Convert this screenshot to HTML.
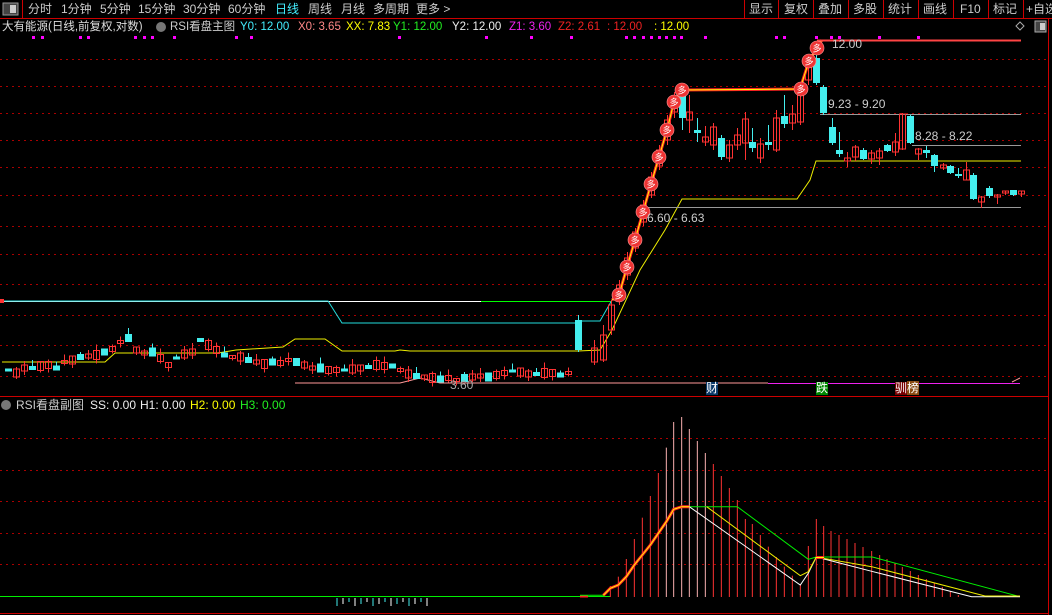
<!DOCTYPE html>
<html><head><meta charset="utf-8"><style>
html,body{margin:0;padding:0;background:#000;width:1052px;height:615px;overflow:hidden}
body{font-family:"Liberation Sans","Noto Sans CJK SC",sans-serif;font-size:12px;color:#ccc;position:relative}
.t{position:absolute;white-space:nowrap;line-height:14px}
.i{font-size:11.5px}
</style></head><body>
<svg id="s" width="1052" height="615" style="position:absolute;left:0;top:0" xmlns="http://www.w3.org/2000/svg"></svg>

<div class="t" style="left:28px;top:2px">分时</div>
<div class="t" style="left:61px;top:2px">1分钟</div>
<div class="t" style="left:100px;top:2px">5分钟</div>
<div class="t" style="left:138px;top:2px">15分钟</div>
<div class="t" style="left:183px;top:2px">30分钟</div>
<div class="t" style="left:228px;top:2px">60分钟</div>
<div class="t" style="left:275px;top:2px;color:#4ef">日线</div>
<div class="t" style="left:308px;top:2px">周线</div>
<div class="t" style="left:341px;top:2px">月线</div>
<div class="t" style="left:373px;top:2px">多周期</div>
<div class="t" style="left:416px;top:2px">更多 &gt;</div>

<div class="t" style="left:749px;top:2px">显示</div>
<div class="t" style="left:784px;top:2px">复权</div>
<div class="t" style="left:818px;top:2px">叠加</div>
<div class="t" style="left:853px;top:2px">多股</div>
<div class="t" style="left:888px;top:2px">统计</div>
<div class="t" style="left:923px;top:2px">画线</div>
<div class="t" style="left:960px;top:2px">F10</div>
<div class="t" style="left:993px;top:2px">标记</div>
<div class="t" style="left:1026px;top:2px">+自选</div>

<div class="t i" style="left:2px;top:20px;color:#ddd">大有能源(日线,前复权,对数)</div>
<div class="t i" style="left:170px;top:20px;color:#ccc">RSI看盘主图</div>
<div class="t i" style="left:240px;top:20px;color:#4ef">Y0: 12.00</div>
<div class="t i" style="left:298px;top:20px;color:#f88">X0: 3.65</div>
<div class="t i" style="left:346px;top:20px;color:#ff0">XX: 7.83</div>
<div class="t i" style="left:393px;top:20px;color:#2e2">Y1: 12.00</div>
<div class="t i" style="left:452px;top:20px;color:#eee">Y2: 12.00</div>
<div class="t i" style="left:509px;top:20px;color:#e2e">Z1: 3.60</div>
<div class="t i" style="left:558px;top:20px;color:#e22">Z2: 2.61</div>
<div class="t i" style="left:607px;top:20px;color:#e22">: 12.00</div>
<div class="t i" style="left:654px;top:20px;color:#ff0">: 12.00</div>

<div class="t" style="left:828px;top:97px;color:#ccc">9.23 - 9.20</div>
<div class="t" style="left:915px;top:129px;color:#ccc">8.28 - 8.22</div>
<div class="t" style="left:647px;top:211px;color:#ccc">6.60 - 6.63</div>
<div class="t" style="left:832px;top:37px;color:#ccc">12.00</div>
<div class="t" style="left:450px;top:378px;color:#aaa">3.60</div>
<div class="t" style="left:706px;top:382px;color:#fff;background:#0a3a6a;font-size:12px;line-height:13px">财</div>
<div class="t" style="left:816px;top:382px;color:#fff;background:#080;font-size:12px;line-height:13px">跌</div>
<div class="t" style="left:895px;top:382px;color:#fff;background:#700;font-size:12px;line-height:13px">驯<span style="background:#8a4a10">榜</span></div>

<div class="t" style="left:16px;top:398px;color:#ccc">RSI看盘副图</div>
<div class="t" style="left:90px;top:398px;color:#eee">SS: 0.00</div>
<div class="t" style="left:140px;top:398px;color:#eee">H1: 0.00</div>
<div class="t" style="left:190px;top:398px;color:#ff0">H2: 0.00</div>
<div class="t" style="left:240px;top:398px;color:#2e2">H3: 0.00</div>

<script>
var s=document.getElementById('s'),h='';
function L(x1,y1,x2,y2,c,w,d){h+='<line x1="'+x1+'" y1="'+y1+'" x2="'+x2+'" y2="'+y2+'" stroke="'+c+'" stroke-width="'+(w||1)+'"'+(d?' stroke-dasharray="'+d+'"':'')+'/>';}
function P(pts,c,w){h+='<polyline fill="none" points="'+pts+'" stroke="'+c+'" stroke-width="'+(w||1)+'"/>';}
function R(x,y,w,hh,f,st){h+='<rect x="'+x+'" y="'+y+'" width="'+w+'" height="'+hh+'" fill="'+f+'"'+(st?' stroke="'+st+'"':'')+'/>';}
L(0,18.5,1052,18.5,'#c00');L(22.5,0,22.5,18,'#c00');
[744,778,813,848,883,918,953,988,1023].forEach(function(x){L(x+.5,0,x+.5,18,'#c00');});
R(3,3,15,12,'#444','#999');R(10,5,6,8,'#ccc');
L(1048.5,18,1048.5,615,'#c00');
L(0,396.5,1048,396.5,'#c00');L(0,613.5,1048,613.5,'#c00');
[59,86,113,140,167,195,226,254,284,315,345,376].forEach(function(y){L(0,y+.5,1048,y+.5,'#a00',1,'2 4');});
[438,470,501,533,564].forEach(function(y){L(0,y+.5,1048,y+.5,'#a00',1,'2 4');});
h+='<circle cx="161" cy="27" r="5" fill="#777"/><circle cx="6" cy="405" r="5" fill="#777"/>';
h+='<path d="M1020 22 L1024 26 L1020 30 L1016 26Z" fill="none" stroke="#aaa"/>';R(1035,21,11,11,'#444','#aaa');R(1040,23,5,7,'#ccc');
[32,41,79,87,134,143,151,173,235,250,398,485,530,570,625,633,642,650,658,665,673,680,704,775,783,815,830,838,878,917].forEach(function(x){R(x,36,3,3,'#f0f');});
L(0,301.5,612,301.5,'#fff');L(481,301.5,612,301.5,'#0f0');
P('0,301 328,301 342,323 578,323 582,321 600,321 612,300','#2dd');
R(0,299,4,4,'#f33');
P('2,362 105,362 115,353 218,353 236,350 283,347 295,339 325,339 342,351 395,351 400,350 410,351 578,351 600,350 612,330 640,270 665,230 682,199 797,199 810,180 816,161 1021,161','#ee0');
P('295,383 400,383 420,378 440,383 578,383 768,383','#f99');L(768,383.5,1020,383.5,'#e2e');L(1012,382,1020,378,'#f99');
L(820,114.5,1021,114.5,'#999');L(912,145.5,1021,145.5,'#999');L(645,207.5,1021,207.5,'#999');
var C=[];
var left=[370,373,368,368,366,365,368,362,360,357,356,355,352,349,342,338,350,353,352,358,365,358,354,352,340,345,350,355,357,357,360,362,364,362,363,360,362,365,368,368,370,370,370,369,368,367,365,366,366,370,374,376,377,378,379,378,380,378,377,376,377,375,373,371,372,374,374,373,373,375,373];
for(var i=0;i<left.length;i++){var y=left[i],up=(i*7)%3!=0,bh=3+(i*5)%7;C.push([8+8*i,y-bh/2,y+bh/2,y-bh/2-(i%4)*2,y+bh/2+(i%3)*2,up?'r':'c']);}
var R2=[[578,320,350,315,352,'c'],[594,348,362,340,365,'r'],[603,335,360,325,362,'r'],[611,305,330,300,335,'r'],[619,285,300,280,305,'r'],[627,258,275,252,280,'r'],[635,232,248,228,252,'r'],[643,205,222,200,226,'r'],[651,177,195,172,198,'r'],[659,150,166,145,170,'r'],[667,120,140,115,145,'r'],[674,97,112,92,118,'r'],
[682,95,118,92,130,'c'],[689,112,120,95,133,'r'],[697,130,133,118,142,'c'],[705,137,142,126,146,'r'],[713,127,145,123,150,'r'],[721,138,157,135,160,'c'],[729,145,158,140,162,'r'],[737,135,145,128,150,'r'],[745,119,143,112,160,'r'],[752,142,148,128,152,'c'],[760,144,158,138,163,'r'],[768,142,145,125,150,'c'],[776,118,150,110,152,'r'],[784,116,124,95,128,'c'],[792,114,123,105,130,'r'],[800,95,122,90,125,'r'],[808,67,80,60,85,'r'],[816,58,83,50,85,'c'],[823,87,113,85,115,'c'],
[832,127,143,118,145,'c'],[839,150,154,132,157,'c'],[847,158,161,152,167,'r'],[855,147,157,145,161,'r'],[863,150,159,148,160,'c'],[871,153,159,150,164,'r'],[879,151,158,148,165,'r'],[887,145,151,144,152,'c'],[895,142,152,133,156,'r'],[902,114,149,113,150,'r'],[910,116,143,115,144,'c'],[918,149,154,148,160,'r'],[926,150,153,146,158,'c'],[934,155,166,154,172,'c'],[943,165,168,163,170,'r'],[950,166,173,165,174,'c'],[958,174,176,168,178,'c'],[966,170,180,162,180,'r'],[973,175,199,173,200,'c'],[981,197,202,196,208,'r'],[989,188,196,186,198,'c'],[997,195,197,194,204,'r'],[1005,191,193,191,195,'r'],[1013,190,195,190,196,'c'],[1021,191,194,191,197,'r']];
C=C.concat(R2);
C.forEach(function(c){var x=c[0],col=c[5]=='r'?'#f33':'#4ee';L(x+.5,c[3],x+.5,c[4],col);if(c[5]=='r'){h+='<rect x="'+(x-2.5)+'" y="'+c[1]+'" width="6" height="'+Math.max(1,c[2]-c[1])+'" fill="none" stroke="'+col+'"/>';}else R(x-3,c[1],7,Math.max(1,c[2]-c[1]),col);});
var dp='612,300 619,295 627,267 635,240 643,212 651,184 659,157 667,130 674,102 682,90 800,89 809,61 817,48 822,40';
P(dp,'#f22',3);P(dp,'#ff0',1);
L(817,40.5,1021,40.5,'#f44',2);
[[619,295],[627,267],[635,240],[643,212],[651,184],[659,157],[667,130],[674,102],[682,90],[801,89],[809,61],[817,48]].forEach(function(p){h+='<circle cx="'+p[0]+'" cy="'+p[1]+'" r="7" fill="#e33" stroke="#f99" stroke-width="0.6"/><text x="'+p[0]+'" y="'+(p[1]+3.5)+'" font-size="9" fill="#fff" text-anchor="middle" font-family="Noto Sans CJK SC,sans-serif">多</text>';});
L(0,596.5,610,596.5,'#0e0');R(580,595,8,2.5,'#f22');
for(var k=0;k<16;k++){var x=337+k*6;L(x,598,x,606-(k%3)*2,k%2?'#fff':'#4ee');}
var bx=[91,115,139,163,187,211,235,259,281,305,328,352,376,400,424,448,472,496,517,541,565,589,613,637,661,685,709,731,753,777,801,825,849,875,899,921,945,967,991,1015,1039,1063,1087,1111,1135];
var bt=[528,500,447,387,323,258,189,113,36,21,57,93,129,162,198,234,270,327,342,375,410,441,470,497,523,408,327,348,363,375,387,399,411,423,435,447,459,471,483,495,507,519,531,543,555];
bx.forEach(function(v,i){var x=580+v/3,col=(i>=7&&i<=12)?'#f9b0b0':'#f33';L(x,410+bt[i]/3,x,597,col);});
function sp(a){return a.map(function(p){return (580+p[0]/3).toFixed(1)+','+(410+p[1]/3).toFixed(1);}).join(' ');}
P(sp([[0,556],[70,556],[91,535],[115,525],[139,500],[163,465],[187,435],[211,405],[235,370],[259,335],[281,298],[305,290],[328,290],[472,290],[685,448],[709,441],[877,441],[1320,560]]),'#0e0');
P(sp([[328,290],[661,525],[685,490],[709,441],[875,484],[1175,560],[1320,560]]),'#fff');
P(sp([[380,290],[661,497],[685,485],[709,441],[875,470],[1215,558],[1320,558]]),'#ee0');
var rc=sp([[70,556],[91,535],[115,525],[139,500],[163,465],[187,435],[211,405],[235,370],[259,335],[281,298],[305,290],[328,290]]);
P(rc,'#f22',3);P(rc,'#ff0',1);
L(816,557.5,824,557.5,'#f22',3);L(816,557.5,824,557.5,'#ff0',1);
s.innerHTML=h;
</script>
</body></html>
